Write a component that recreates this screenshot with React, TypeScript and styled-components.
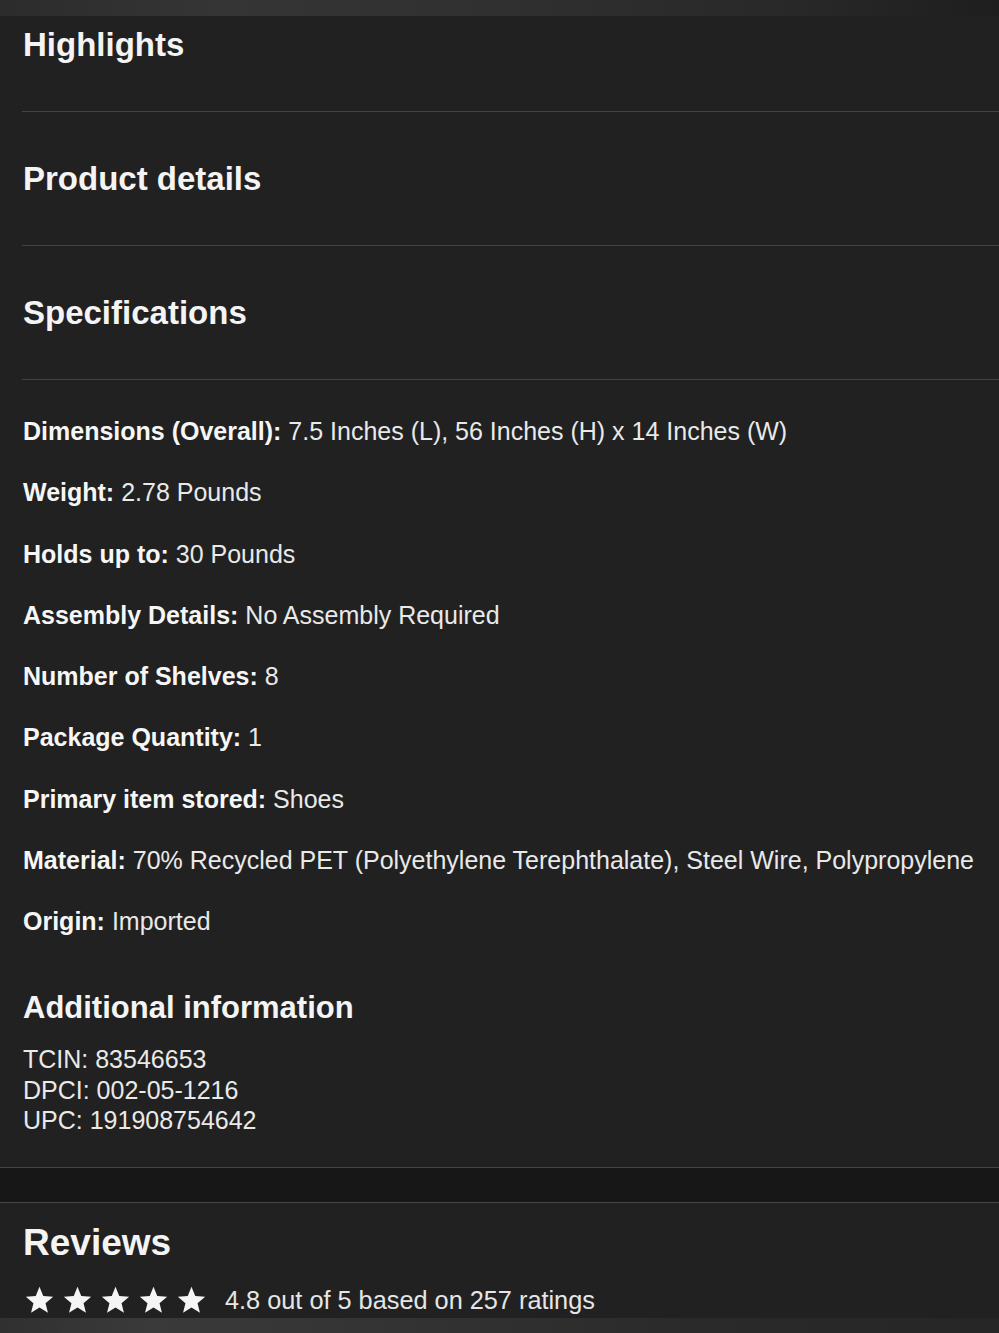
import React from "react";
import styled, { createGlobalStyle } from "styled-components";

const GlobalStyle = createGlobalStyle`
  html, body {
    margin: 0;
    padding: 0;
    background: #212121;
  }
  body {
    font-family: "Liberation Sans", Arial, Helvetica, sans-serif;
    color: #f2f2f2;
    -webkit-font-smoothing: antialiased;
  }
  * { box-sizing: border-box; }
`;

const Page = styled.div`
  width: 999px;
  min-height: 1333px;
  display: flex;
  flex-direction: column;
  background: #212121;
  overflow: hidden;
`;

const TopShade = styled.div`
  height: 16px;
  flex: none;
  background: linear-gradient(
    90deg,
    #2c2c2c 0%,
    #353535 22%,
    #303030 50%,
    #282828 80%,
    #1e1e1e 100%
  );
`;

const BottomShade = styled.div`
  height: 17px;
  flex: none;
  background: linear-gradient(
    90deg,
    #303030 0%,
    #3a3a3a 15%,
    #333333 40%,
    #2a2a2a 70%,
    #262626 100%
  );
`;

const Accordion = styled.div`
  margin-left: 22px;
  display: flex;
  flex-direction: column;
`;

const Item = styled.section<{ $first?: boolean }>`
  padding: ${(p) => (p.$first ? "9px" : "47px")} 0 46px 0;
  border-bottom: 1px solid #434343;
`;

const ItemTitle = styled.h2`
  margin: 0;
  font-size: 33px;
  line-height: 40px;
  font-weight: 700;
  color: #f4f4f4;
  padding-left: 1px;
`;

const SpecBody = styled.div`
  padding: 36px 0 31px 1px;
  display: flex;
  flex-direction: column;
`;

const SpecList = styled.div`
  display: flex;
  flex-direction: column;
  gap: 31.3px;
`;

const SpecRow = styled.div`
  font-size: 25px;
  line-height: 30px;
  color: #e9e9e9;
  white-space: nowrap;
`;

const Label = styled.b`
  font-weight: 700;
  color: #f6f6f6;
`;

const SubTitle = styled.h3`
  margin: 54px 0 18px 0;
  font-size: 31px;
  line-height: 36px;
  font-weight: 700;
  color: #f4f4f4;
`;

const IdLine = styled.div`
  font-size: 25px;
  line-height: 30.4px;
  color: #e9e9e9;
`;

const Band = styled.div`
  height: 36px;
  flex: none;
  background: #171717;
  border-top: 1px solid #444444;
  border-bottom: 1px solid #474747;
`;

const Reviews = styled.section`
  padding: 19px 0 0 23px;
  display: flex;
  flex-direction: column;
  gap: 18px;
  flex: 1;
`;

const ReviewsTitle = styled.h2`
  margin: 0;
  font-size: 37px;
  line-height: 42px;
  font-weight: 700;
  color: #f4f4f4;
`;

const RatingRow = styled.div`
  display: flex;
  align-items: center;
  height: 36px;
  gap: 19px;
`;

const Stars = styled.div`
  display: flex;
  align-items: center;
  gap: 9px;
  padding-left: 2px;
`;

const RatingText = styled.span`
  font-size: 25.3px;
  line-height: 30px;
  color: #e6e6e6;
`;

const Star = () => (
  <svg width="29" height="28" viewBox="0 0 24 23" aria-hidden="true">
    <path
      d="M12 0.6l3.1 7.6 8.2 0.6-6.3 5.3 2 8-7-4.3-7 4.3 2-8L0.7 8.8l8.2-0.6z"
      fill="#f5f5f5"
    />
  </svg>
);

const specs: { label: string; value: string }[] = [
  { label: "Dimensions (Overall):", value: "7.5 Inches (L), 56 Inches (H) x 14 Inches (W)" },
  { label: "Weight:", value: "2.78 Pounds" },
  { label: "Holds up to:", value: "30 Pounds" },
  { label: "Assembly Details:", value: "No Assembly Required" },
  { label: "Number of Shelves:", value: "8" },
  { label: "Package Quantity:", value: "1" },
  { label: "Primary item stored:", value: "Shoes" },
  {
    label: "Material:",
    value: "70% Recycled PET (Polyethylene Terephthalate), Steel Wire, Polypropylene",
  },
  { label: "Origin:", value: "Imported" },
];

export default function App() {
  return (
    <>
      <GlobalStyle />
      <Page>
        <TopShade />
        <Accordion>
          <Item $first>
            <ItemTitle>Highlights</ItemTitle>
          </Item>
          <Item>
            <ItemTitle>Product details</ItemTitle>
          </Item>
          <Item>
            <ItemTitle>Specifications</ItemTitle>
          </Item>
          <SpecBody>
            <SpecList>
              {specs.map((s) => (
                <SpecRow key={s.label}>
                  <Label>{s.label}</Label> {s.value}
                </SpecRow>
              ))}
            </SpecList>
            <SubTitle>Additional information</SubTitle>
            <IdLine>TCIN: 83546653</IdLine>
            <IdLine>DPCI: 002-05-1216</IdLine>
            <IdLine>UPC: 191908754642</IdLine>
          </SpecBody>
        </Accordion>
        <Band />
        <Reviews>
          <ReviewsTitle>Reviews</ReviewsTitle>
          <RatingRow>
            <Stars>
              {[0, 1, 2, 3, 4].map((i) => (
                <Star key={i} />
              ))}
            </Stars>
            <RatingText>4.8 out of 5 based on 257 ratings</RatingText>
          </RatingRow>
        </Reviews>
        <BottomShade />
      </Page>
    </>
  );
}
